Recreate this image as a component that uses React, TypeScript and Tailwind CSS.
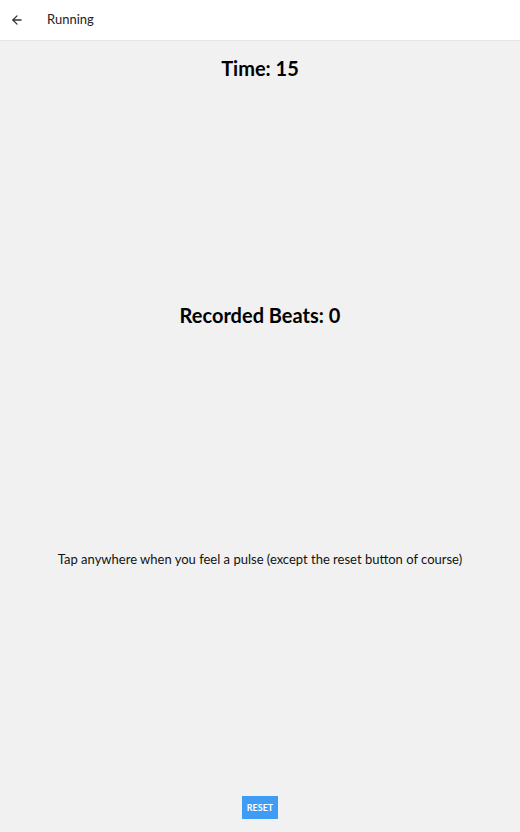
import { ArrowLeft } from 'lucide-react';

const App = () => {
  return (
    <div className="flex flex-col w-full h-[832px] bg-[#f1f1f1] text-black font-['Lato',sans-serif]">
      <div className="flex items-center h-[41px] px-[10px] bg-white border-b border-[#e6e6e6]">
        <ArrowLeft className="w-[14px] h-[14px] text-[#333]" strokeWidth={2.2} />
        <span className="ml-[23px] text-[13px] text-[#222]">Running</span>
      </div>
      <div className="flex flex-col flex-1 items-center justify-between pt-[15px] pb-[13px]">
        <div className="text-[20px] font-bold leading-[24px]">Time: 15</div>
        <div className="text-[20px] font-bold leading-[14px]">Recorded Beats: 0</div>
        <div className="text-[13px] leading-[18px] text-[#111]">
          Tap anywhere when you feel a pulse (except the reset button of course)
        </div>
        <button className="px-[5px] h-[23px] bg-[#3f9cf5] text-white text-[9px] font-bold">RESET</button>
      </div>
    </div>
  );
};

export default App;
